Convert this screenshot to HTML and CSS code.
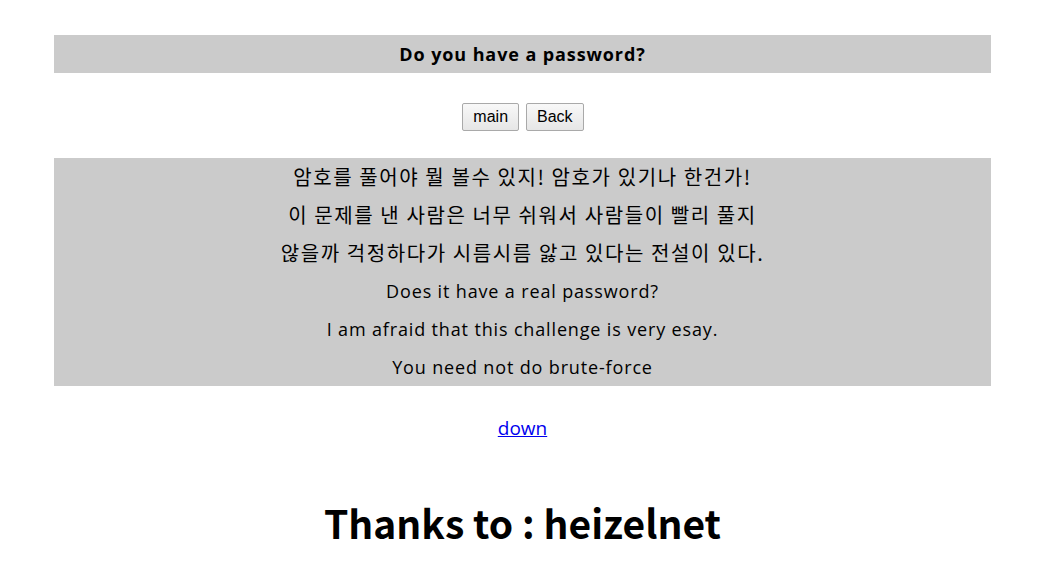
FILE: index.html
```html
<!DOCTYPE html>
<html>
<head>
<meta charset="utf-8">
<link rel="stylesheet" href="styles.css">
</head>
<body>
<div class="page">
  <div class="bar title">Do you have a password?</div>
  <div class="buttons">
    <button class="btn">main</button>
    <button class="btn">Back</button>
  </div>
  <div class="bar body">
    <p class="ko">암호를 풀어야 뭘 볼수 있지! 암호가 있기나 한건가!</p>
    <p class="ko">이 문제를 낸 사람은 너무 쉬워서 사람들이 빨리 풀지</p>
    <p class="ko">않을까 걱정하다가 시름시름 앓고 있다는 전설이 있다.</p>
    <p class="en">Does it have a real password?</p>
    <p class="en">I am afraid that this challenge is very esay.</p>
    <p class="en">You need not do brute-force</p>
  </div>
  <div class="down"><a href="#">down</a></div>
  <h1 class="thanks">Thanks to : heizelnet</h1>
</div>
</body>
</html>
```
FILE: styles.css
```css
html, body {
  margin: 0;
  padding: 0;
  background: #fff;
}
body {
  font-family: "Noto Sans CJK KR", "Noto Sans", sans-serif;
  color: #000;
}
.page {
  width: 937px;
  margin-left: 54px;
  padding-top: 35px;
  display: flex;
  flex-direction: column;
  align-items: stretch;
}
.bar {
  background: #cbcbcb;
  text-align: center;
}
.title {
  height: 38px;
  line-height: 38px;
  font-family: "Open Sans", "Noto Sans CJK KR", sans-serif;
  font-size: 18px;
  font-weight: bold;
  letter-spacing: 0.9px;
}
.buttons {
  display: flex;
  justify-content: center;
  gap: 7px;
  margin-top: 30px;
  height: 28px;
  padding-left: 1px;
}
.btn {
  font-family: "Liberation Sans", Arial, sans-serif;
  font-size: 16px;
  height: 28px;
  padding: 0 10px;
  background: linear-gradient(#f8f8f8, #e6e6e6);
  border: 1px solid #a9a9a9;
  border-radius: 2px;
  color: #000;
}
.body {
  margin-top: 27px;
  padding: 0;
}
.body p {
  margin: 0;
  height: 38px;
  line-height: 38px;
  font-size: 18px;
}
.body .ko {
  font-family: "Noto Sans CJK KR", sans-serif;
  font-size: 20px;
  letter-spacing: 1.6px;
}
.body .en {
  font-family: "Open Sans", "Noto Sans CJK KR", sans-serif;
  font-size: 18px;
  letter-spacing: 0.85px;
}
.down {
  text-align: center;
  margin-top: 24px;
  font-family: "Open Sans", "Noto Sans CJK KR", sans-serif;
  font-size: 19px;
  line-height: 36px;
}
.down a {
  color: #0000ee;
}
.thanks {
  text-align: center;
  font-size: 39px;
  font-weight: bold;
  margin: 48px 0 0;
  line-height: 56px;
}
```
